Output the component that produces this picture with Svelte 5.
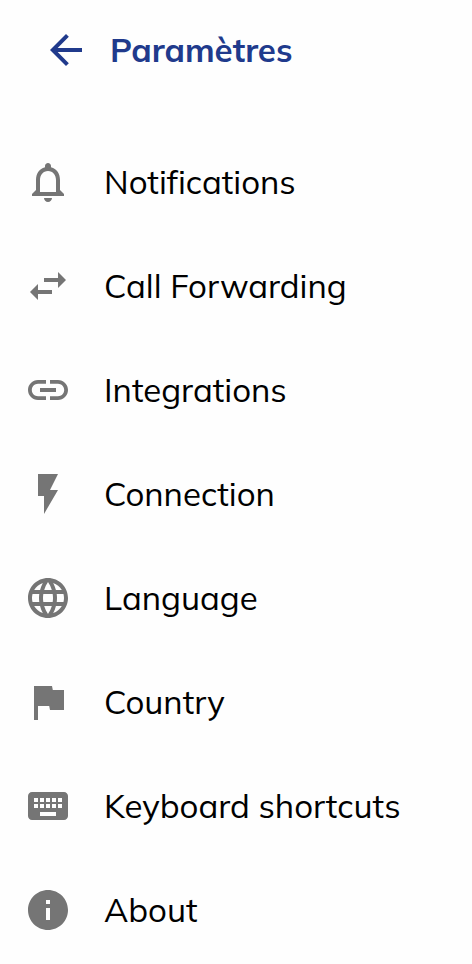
<script lang="ts">
  interface MenuItem {
    id: string;
    label: string;
    icon: string;
  }

  const items: MenuItem[] = [
    {
      id: 'notifications',
      label: 'Notifications',
      icon: 'M12 22c1.1 0 2-.9 2-2h-4c0 1.1.9 2 2 2zm6-6v-5c0-3.07-1.63-5.64-4.5-6.32V4c0-.83-.67-1.5-1.5-1.5s-1.5.67-1.5 1.5v.68C7.64 5.36 6 7.92 6 11v5l-2 2v1h16v-1l-2-2zm-2 1H8v-6c0-2.48 1.51-4.5 4-4.5s4 2.02 4 4.5v6z'
    },
    {
      id: 'call-forwarding',
      label: 'Call Forwarding',
      icon: 'M6.99 11L3 15l3.99 4v-3H14v-2H6.99v-3zM21 9l-3.99-4v3H10v2h7.01v3L21 9z'
    },
    {
      id: 'integrations',
      label: 'Integrations',
      icon: 'M3.9 12c0-1.71 1.39-3.1 3.1-3.1h4V7H7c-2.76 0-5 2.24-5 5s2.24 5 5 5h4v-1.9H7c-1.71 0-3.1-1.39-3.1-3.1zM8 13h8v-2H8v2zm9-6h-4v1.9h4c1.71 0 3.1 1.39 3.1 3.1s-1.39 3.1-3.1 3.1h-4V17h4c2.76 0 5-2.24 5-5s-2.24-5-5-5z'
    },
    {
      id: 'connection',
      label: 'Connection',
      icon: 'M7 2v11h3v9l7-12h-4l4-8z'
    },
    {
      id: 'language',
      label: 'Language',
      icon: 'M11.99 2C6.47 2 2 6.48 2 12s4.47 10 9.99 10C17.52 22 22 17.52 22 12S17.52 2 11.99 2zm6.93 6h-2.95c-.32-1.25-.78-2.45-1.38-3.56 1.84.63 3.37 1.91 4.33 3.56zM12 4.04c.83 1.2 1.48 2.53 1.91 3.96h-3.82c.43-1.43 1.08-2.76 1.91-3.96zM4.26 14C4.1 13.36 4 12.69 4 12s.1-1.36.26-2h3.38c-.08.66-.14 1.32-.14 2s.06 1.34.14 2H4.26zm.82 2h2.95c.32 1.25.78 2.45 1.38 3.56-1.84-.63-3.37-1.9-4.33-3.56zm2.95-8H5.08c.96-1.66 2.49-2.93 4.33-3.56C8.81 5.55 8.35 6.75 8.03 8zM12 19.96c-.83-1.2-1.48-2.53-1.91-3.96h3.82c-.43 1.43-1.08 2.76-1.91 3.96zM14.34 14H9.66c-.09-.66-.16-1.32-.16-2s.07-1.35.16-2h4.68c.09.65.16 1.32.16 2s-.07 1.34-.16 2zm.25 5.56c.6-1.11 1.06-2.31 1.38-3.56h2.95c-.96 1.65-2.49 2.93-4.33 3.56zM16.36 14c.08-.66.14-1.32.14-2s-.06-1.34-.14-2h3.38c.16.64.26 1.31.26 2s-.1 1.36-.26 2h-3.38z'
    },
    {
      id: 'country',
      label: 'Country',
      icon: 'M14.4 6L14 4H5v17h2v-7h5.6l.4 2h7V6z'
    },
    {
      id: 'shortcuts',
      label: 'Keyboard shortcuts',
      icon: 'M20 5H4c-1.1 0-1.99.9-1.99 2L2 17c0 1.1.9 2 2 2h16c1.1 0 2-.9 2-2V7c0-1.1-.9-2-2-2zm-9 3h2v2h-2V8zm0 3h2v2h-2v-2zM8 8h2v2H8V8zm0 3h2v2H8v-2zm-1 2H5v-2h2v2zm0-3H5V8h2v2zm9 7H8v-2h8v2zm0-4h-2v-2h2v2zm0-3h-2V8h2v2zm3 3h-2v-2h2v2zm0-3h-2V8h2v2z'
    },
    {
      id: 'about',
      label: 'About',
      icon: 'M12 2C6.48 2 2 6.48 2 12s4.48 10 10 10 10-4.48 10-10S17.52 2 12 2zm1 15h-2v-6h2v6zm0-8h-2V7h2v2z'
    }
  ];
</script>

<main class="settings">
  <header class="settings-header">
    <button class="back-button" type="button" aria-label="Retour">
      <svg class="icon" viewBox="0 0 24 24" aria-hidden="true">
        <path d="M20 11H7.83l5.59-5.59L12 4l-8 8 8 8 1.41-1.41L7.83 13H20v-2z" />
      </svg>
    </button>
    <h1 class="title">Paramètres</h1>
  </header>

  <nav>
    <ul class="menu">
      {#each items as item (item.id)}
        <li>
          <a class="menu-item" href="#{item.id}">
            <svg class="icon" viewBox="0 0 24 24" aria-hidden="true">
              <path d={item.icon} />
            </svg>
            <span class="label">{item.label}</span>
          </a>
        </li>
      {/each}
    </ul>
  </nav>
</main>

<style>
  :global(body) {
    margin: 0;
    background: #fefefe;
  }

  .settings {
    font-family: Mulish, Muli, Lato, sans-serif;
    font-variant-ligatures: none;
    color: #000;
  }

  .settings-header {
    display: flex;
    align-items: center;
    gap: 20px;
    height: 100px;
    padding: 0 42px;
    margin-bottom: 30px;
    color: #203a8c;
  }

  .back-button {
    display: flex;
    padding: 0;
    border: none;
    background: none;
    color: inherit;
    cursor: pointer;
  }

  .icon {
    display: block;
    width: 48px;
    height: 48px;
    flex-shrink: 0;
    fill: currentColor;
  }

  .title {
    margin: 0;
    font-size: 33px;
    font-weight: 700;
    line-height: 48px;
  }

  .menu {
    margin: 0;
    padding: 0;
    list-style: none;
  }

  .menu-item {
    display: flex;
    align-items: center;
    gap: 32px;
    height: 104px;
    padding: 0 24px;
    color: inherit;
    text-decoration: none;
  }

  .menu-item .icon {
    color: #757575;
  }

  .label {
    font-size: 33px;
    line-height: 48px;
  }
</style>
